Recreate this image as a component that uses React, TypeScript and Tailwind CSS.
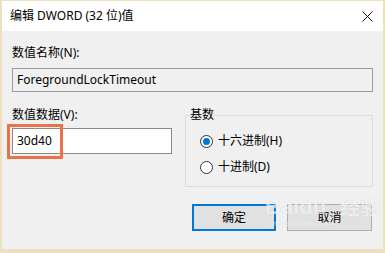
import React from "react";

const font = "font-['Segoe_UI','Noto_Sans','Noto_Sans_CJK_SC',sans-serif]";

function Radio({ checked, label }: { checked: boolean; label: string }) {
  return (
    <div className="flex items-center h-[26px] pl-[14px]">
      <span className="w-[13px] h-[13px] rounded-full border border-[#333] bg-white flex items-center justify-center">
        {checked && <span className="w-[7px] h-[7px] rounded-full bg-[#0078d7]" />}
      </span>
      <span className="ml-[5px] text-[12px] leading-[16px] text-black">{label}</span>
    </div>
  );
}

export default function App() {
  return (
    <div className={`w-[385px] h-[253px] bg-[#ebe2bd] pl-[2px] pr-[2px] pt-[1px] pb-[4px] ${font}`}>
      <div className="relative w-full h-full flex flex-col bg-[#f0f0f0] overflow-hidden">
        {/* title bar */}
        <div className="h-[30px] bg-white flex items-center justify-between pl-[8px] pr-[10px] shrink-0">
          <span className="text-[12px] leading-[16px] text-black">编辑 DWORD (32 位)值</span>
          <svg width="11" height="11" viewBox="0 0 11 11">
            <path d="M0.5 0.5 L10.5 10.5 M10.5 0.5 L0.5 10.5" stroke="#111" strokeWidth="1" />
          </svg>
        </div>
        {/* body */}
        <div className="flex-1 flex flex-col px-[10px] pt-[14px]">
          <div className="text-[12px] leading-[16px] text-black">数值名称(N):</div>
          <div className="mt-[7px] h-[24px] border border-[#9a9a9a] bg-[#f0f0f0] flex items-center pl-[4px] text-[12px] text-black">
            ForegroundLockTimeout
          </div>
          <div className="mt-[15px] flex gap-[13px]">
            <div className="w-[160px] flex flex-col">
              <div className="text-[12px] leading-[16px] text-black">数值数据(V):</div>
              <div className="relative mt-[5px] h-[26px] border border-[#8a8a8a] bg-white flex items-center pl-[4px] text-[12px] text-black">
                30d40
                <div className="absolute left-[-6px] top-[-5px] w-[56px] h-[35px] border-[3px] border-[#ea7246]" />
              </div>
            </div>
            <fieldset className="flex-1 h-[80px] border border-[#dcdcdc] px-[0px] pt-[0px] pb-[6px] m-0">
              <legend className="ml-[4px] px-[0px] text-[12px] leading-[16px] text-black">基数</legend>
              <div className="flex flex-col mt-[5px]">
                <Radio checked label="十六进制(H)" />
                <Radio checked={false} label="十进制(D)" />
              </div>
            </fieldset>
          </div>
          <div className="mt-[17px] flex justify-end gap-[11px] pr-[1px]">
            <button className="w-[84px] h-[27px] border-2 border-[#0078d7] bg-[#e1e1e1] text-[12px] text-black">确定</button>
            <button className="w-[85px] h-[27px] border border-[#adadad] bg-[#e1e1e1] text-[12px] text-black">取消</button>
          </div>
        </div>
        {/* watermark */}
        <div className="absolute left-[263px] top-[194px] flex flex-col items-start pointer-events-none opacity-70">
          <div className="flex items-end text-white/80 [text-shadow:0_0_1px_#c0c0c0] font-bold">
            <span className="text-[22px] leading-[24px] font-['Liberation_Sans',sans-serif]">Bai</span>
            <span className="text-[22px] leading-[24px] font-['Liberation_Sans',sans-serif]">du</span>
            <span className="ml-[14px] text-[20px] leading-[24px] font-['Noto_Sans_CJK_SC',sans-serif]">经验</span>
          </div>
          <div className="text-[8px] leading-[10px] text-white/80 [text-shadow:0_0_1px_#c8c8c8] font-['Liberation_Sans',sans-serif] ml-[4px]">
            jingyan.baidu.com
          </div>
        </div>
      </div>
    </div>
  );
}
